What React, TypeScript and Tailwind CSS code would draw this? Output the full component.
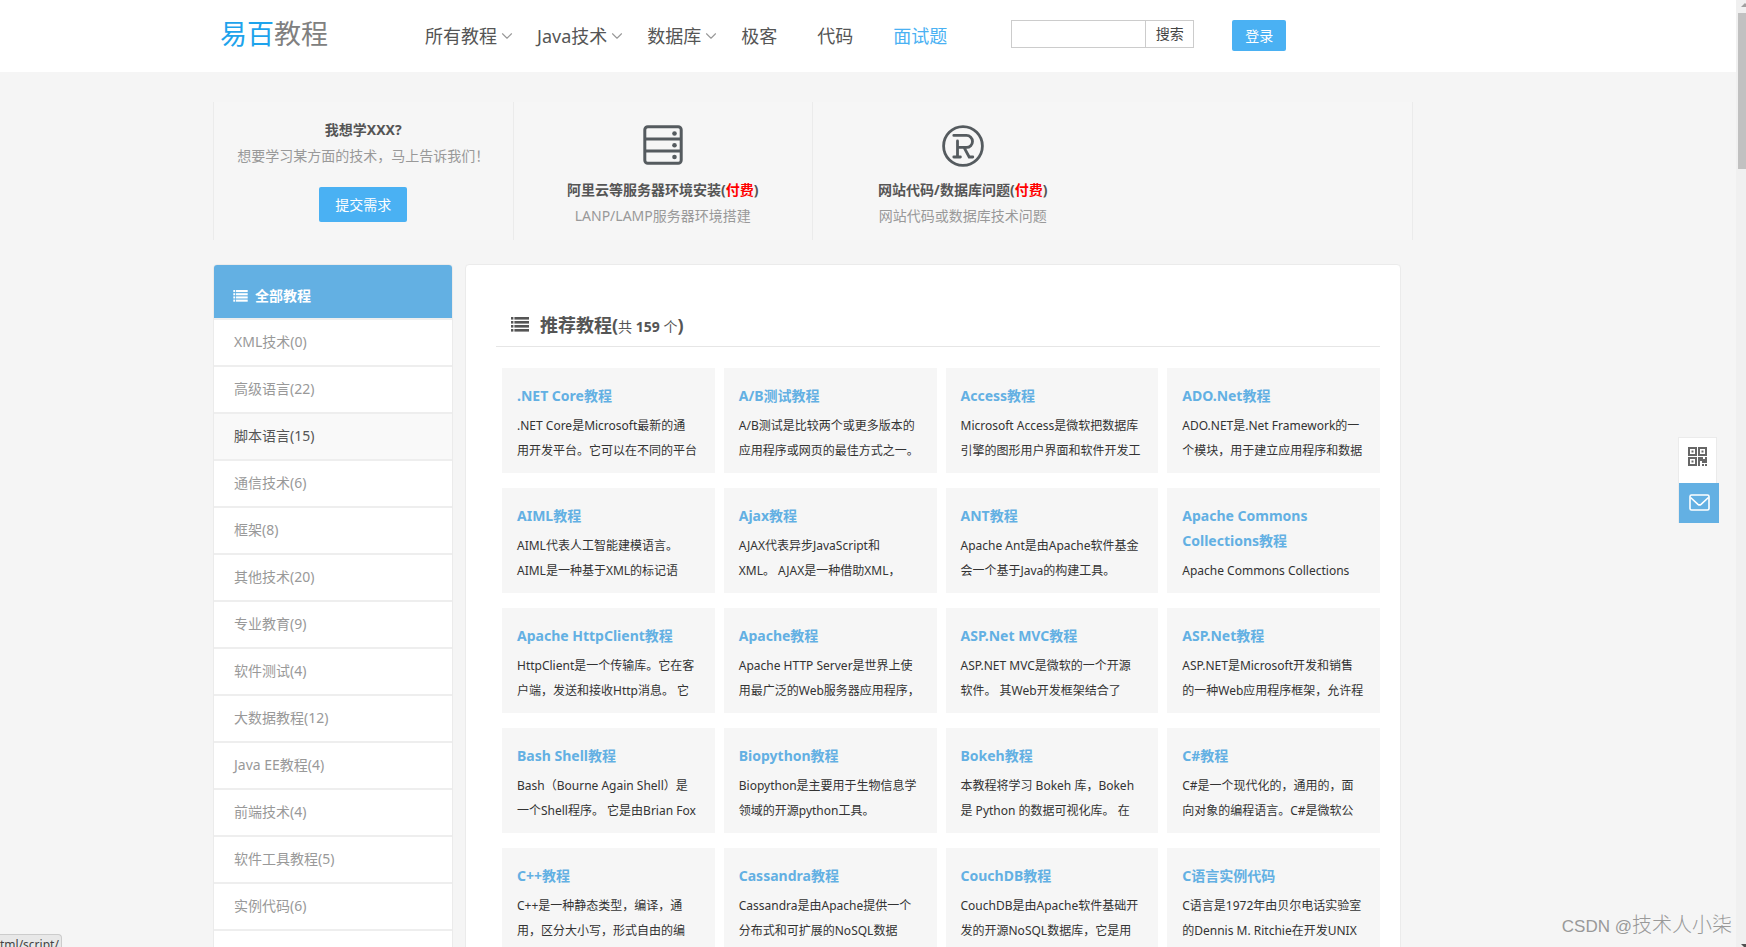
import React from 'react';
import { ChevronDown } from 'lucide-react';

interface Tutorial {
  title: string[];
  lines: string[];
}

const navItems = [
  { label: '所有教程', menu: true },
  { label: 'Java技术', menu: true },
  { label: '数据库', menu: true },
];

const categories = [
  'XML技术(0)',
  '高级语言(22)',
  '脚本语言(15)',
  '通信技术(6)',
  '框架(8)',
  '其他技术(20)',
  '专业教育(9)',
  '软件测试(4)',
  '大数据教程(12)',
  'Java EE教程(4)',
  '前端技术(4)',
  '软件工具教程(5)',
  '实例代码(6)',
];

const activeCategory = '脚本语言(15)';

const tutorials: Tutorial[] = [
  { title: ['.NET Core教程'], lines: ['.NET Core是Microsoft最新的通', '用开发平台。它可以在不同的平台'] },
  { title: ['A/B测试教程'], lines: ['A/B测试是比较两个或更多版本的', '应用程序或网页的最佳方式之一。'] },
  { title: ['Access教程'], lines: ['Microsoft Access是微软把数据库', '引擎的图形用户界面和软件开发工'] },
  { title: ['ADO.Net教程'], lines: ['ADO.NET是.Net Framework的一', '个模块，用于建立应用程序和数据'] },
  { title: ['AIML教程'], lines: ['AIML代表人工智能建模语言。', 'AIML是一种基于XML的标记语'] },
  { title: ['Ajax教程'], lines: ['AJAX代表异步JavaScript和', 'XML。 AJAX是一种借助XML，'] },
  { title: ['ANT教程'], lines: ['Apache Ant是由Apache软件基金', '会一个基于Java的构建工具。'] },
  { title: ['Apache Commons', 'Collections教程'], lines: ['Apache Commons Collections'] },
  { title: ['Apache HttpClient教程'], lines: ['HttpClient是一个传输库。它在客', '户端，发送和接收Http消息。 它'] },
  { title: ['Apache教程'], lines: ['Apache HTTP Server是世界上使', '用最广泛的Web服务器应用程序，'] },
  { title: ['ASP.Net MVC教程'], lines: ['ASP.NET MVC是微软的一个开源', '软件。 其Web开发框架结合了'] },
  { title: ['ASP.Net教程'], lines: ['ASP.NET是Microsoft开发和销售', '的一种Web应用程序框架，允许程'] },
  { title: ['Bash Shell教程'], lines: ['Bash（Bourne Again Shell）是', '一个Shell程序。 它是由Brian Fox'] },
  { title: ['Biopython教程'], lines: ['Biopython是主要用于生物信息学', '领域的开源python工具。'] },
  { title: ['Bokeh教程'], lines: ['本教程将学习 Bokeh 库，Bokeh', '是 Python 的数据可视化库。 在'] },
  { title: ['C#教程'], lines: ['C#是一个现代化的，通用的，面', '向对象的编程语言。C#是微软公'] },
  { title: ['C++教程'], lines: ['C++是一种静态类型，编译，通', '用，区分大小写，形式自由的编'] },
  { title: ['Cassandra教程'], lines: ['Cassandra是由Apache提供一个', '分布式和可扩展的NoSQL数据'] },
  { title: ['CouchDB教程'], lines: ['CouchDB是由Apache软件基础开', '发的开源NoSQL数据库，它是用'] },
  { title: ['C语言实例代码'], lines: ['C语言是1972年由贝尔电话实验室', '的Dennis M. Ritchie在开发UNIX'] },
];

const ListIcon = ({ className }: { className: string }) => (
  <svg viewBox="0 0 18 15" className={className} fill="currentColor" aria-hidden="true">
    {[0, 4, 8, 12].map((y) => (
      <g key={y}>
        <rect x="0" y={y} width="2.4" height="2.6" />
        <rect x="3.4" y={y} width="14.6" height="2.6" />
      </g>
    ))}
  </svg>
);

const ServerIcon = () => (
  <svg viewBox="0 0 40 40" className="h-10 w-10" fill="none" stroke="currentColor" strokeWidth="3" aria-hidden="true">
    <rect x="1.8" y="1.8" width="36.4" height="36.4" rx="3" />
    <path d="M1.8 14h36.4M1.8 26h36.4" />
    <g fill="currentColor" stroke="none">
      <circle cx="31.5" cy="8.5" r="2.3" />
      <circle cx="31.5" cy="20.3" r="2.3" />
      <circle cx="31.5" cy="32" r="2.3" />
    </g>
  </svg>
);

const RegisteredIcon = () => (
  <svg viewBox="0 0 42 42" className="h-[42px] w-[42px]" fill="none" stroke="currentColor" strokeWidth="2.8" strokeLinecap="round" aria-hidden="true">
    <circle cx="21" cy="21" r="19.4" />
    <path d="M11.8 10.4H24.500a6 6 0 0 1 0 12H15.500M15.500 16v16M11.800 32h6.600M22 22.400l5.200 9.600h3.600" />
  </svg>
);

const QrIcon = () => (
  <svg viewBox="0 0 19 19" className="h-[19px] w-[19px]" aria-hidden="true">
    <g fill="none" stroke="currentColor" strokeWidth="2">
      <rect x="1" y="1" width="7" height="7" />
      <rect x="11" y="1" width="7" height="7" />
      <rect x="1" y="11" width="7" height="7" />
    </g>
    <g fill="currentColor">
      <rect x="3.5" y="3.5" width="2" height="2" />
      <rect x="13.5" y="3.5" width="2" height="2" />
      <rect x="3.5" y="13.5" width="2" height="2" />
      <path d="M10 10h5v2h2v-2h2v6h-5v-2h-2v5h-2zM14 17h2v2h-2zM17 17h2v2h-2z" />
    </g>
  </svg>
);

const MailIcon = () => (
  <svg viewBox="0 0 21 17" className="h-[17px] w-[21px]" fill="none" stroke="currentColor" strokeWidth="1.6" strokeLinejoin="round" aria-hidden="true">
    <rect x="1" y="1" width="19" height="15" rx="1.5" />
    <path d="M1.5 3.5l7.5 6.8q1.500 1.300 3 0l7.500-6.800" />
  </svg>
);

const Header = () => (
  <header className="h-[72px] bg-white pr-[120px]">
    <div className="mx-auto flex w-[1200px] items-start">
      <a href="#" className="ml-[7px] mt-[14px] text-[27px] leading-10 text-[#808080]">
        <span className="text-[#1ea3ec]">易百</span>教程
      </a>
      <nav className="ml-[97px] mt-[22px] flex text-lg leading-7 text-[#555]">
        {navItems.map((item) => (
          <a key={item.label} href="#" className="mr-[21px] flex items-center">
            {item.label}
            {item.menu && <ChevronDown className="ml-px text-[#999]" size={18} strokeWidth={1.5} />}
          </a>
        ))}
        <a href="#">极客</a>
        <a href="#" className="ml-10">代码</a>
        <a href="#" className="ml-10 text-[#4ab1f3]">面试题</a>
      </nav>
      <form className="ml-16 mt-5 flex h-7" onSubmit={(e) => e.preventDefault()}>
        <input type="text" aria-label="搜索" className="w-[135px] border border-[#ccc] bg-white px-2 text-sm outline-none" />
        <button type="submit" className="w-12 border border-l-0 border-[#ccc] bg-white text-sm text-[#444]">搜索</button>
      </form>
      <button className="ml-[38px] mt-5 h-[31px] w-[54px] rounded-xs bg-[#4ab1f3] text-sm text-white">登录</button>
    </div>
  </header>
);

const Services = () => (
  <section className="mt-[30px] grid h-[138px] grid-cols-4 border-x border-[#ebebeb] bg-[#f6f6f6] text-center text-sm leading-[26px] text-[#999]">
    <div className="border-r border-[#ebebeb] pt-[15px]">
      <h3 className="font-bold text-[#555]">我想学XXX?</h3>
      <p>想要学习某方面的技术，马上告诉我们！</p>
      <button className="mt-[18px] h-[35px] w-[88px] rounded-xs bg-[#4ab1f3] text-white">提交需求</button>
    </div>
    <div className="flex flex-col items-center border-r border-[#ebebeb] pt-[23px] text-[#555b5f]">
      <div className="flex h-[52px] items-start">
        <ServerIcon />
      </div>
      <h3 className="font-bold text-[#555]">阿里云等服务器环境安装(<span className="text-[#f00]">付费</span>)</h3>
      <p className="text-[#999]">LANP/LAMP服务器环境搭建</p>
    </div>
    <div className="flex flex-col items-center pt-[23px] text-[#555b5f]">
      <div className="flex h-[52px] items-start">
        <RegisteredIcon />
      </div>
      <h3 className="font-bold text-[#555]">网站代码/数据库问题(<span className="text-[#f00]">付费</span>)</h3>
      <p className="text-[#999]">网站代码或数据库技术问题</p>
    </div>
  </section>
);

const Sidebar = () => (
  <aside className="w-60 shrink-0 overflow-hidden rounded-t border border-[#ebebeb] bg-white text-sm">
    <h2 className="flex h-[53px] items-center bg-[#63b0e3] pl-[19px] pt-2 font-bold text-white">
      <ListIcon className="mr-[7px] h-3 w-[15px]" />
      全部教程
    </h2>
    <ul>
      {categories.map((name) => (
        <li key={name} className="border-t-2 border-[#eee]">
          <a
            href="#"
            className={`block h-[45px] pl-5 leading-[44px] ${
              name === activeCategory ? 'bg-[#f9f9f9] text-[#555]' : 'text-[#999]'
            }`}
          >
            {name}
          </a>
        </li>
      ))}
      <li className="border-t-2 border-[#eee]" />
    </ul>
  </aside>
);

const TutorialCard = ({ tutorial }: { tutorial: Tutorial }) => (
  <a href="#" className="block h-[105px] overflow-hidden whitespace-nowrap bg-[#f6f6f6] px-[15px] pt-[15px]">
    <h3 className="text-sm font-bold leading-[25px] text-[#63b0e3]">
      {tutorial.title.map((line) => (
        <span key={line} className="block">{line}</span>
      ))}
    </h3>
    <p className="mt-[5px] text-xs leading-[25px] text-[#333]">
      {tutorial.lines.map((line) => (
        <span key={line} className="block">{line}</span>
      ))}
    </p>
  </a>
);

const App: React.FC = () => {
  return (
    <div className="relative h-screen overflow-hidden bg-[#f5f5f5] font-['Noto_Sans','Noto_Sans_CJK_SC',sans-serif]">
      <Header />
      <div className="pr-[120px]">
        <div className="mx-auto w-[1200px]">
          <Services />
          <div className="mt-6 flex gap-3">
            <Sidebar />
            <main className="mr-3 flex-1 rounded-t border border-[#ebebeb] bg-white pb-8 pl-[30px] pr-5">
              <h1 className="mt-10 flex h-[42px] items-center border-b border-[#e6e6e6] pb-0.5 pl-[15px] text-lg font-bold text-[#555]">
                <ListIcon className="mr-[11px] h-[15px] w-[18px]" />
                <span>
                  推荐教程(
                  <span className="text-sm font-normal">
                    共 <b>159</b> 个
                  </span>
                  )
                </span>
              </h1>
              <div className="ml-1.5 mt-[21px] grid grid-cols-4 gap-x-[9px] gap-y-[15px]">
                {tutorials.map((tutorial) => (
                  <TutorialCard key={tutorial.title[0]} tutorial={tutorial} />
                ))}
              </div>
            </main>
          </div>
        </div>
      </div>

      {/* floating contact buttons */}
      <div className="absolute right-[27px] top-[437px] flex w-[41px] flex-col items-start border-l border-[#ebebeb]">
        <button aria-label="二维码" className="flex h-[46px] w-[38px] items-start justify-center border-r border-t border-[#ebebeb] bg-white pt-[9px] text-[#666]">
          <QrIcon />
        </button>
        <button aria-label="邮箱" className="flex h-10 w-10 items-start justify-center bg-[#63b0e3] pt-[11px] text-white">
          <MailIcon />
        </button>
      </div>

      {/* scrollbar */}
      <div className="absolute inset-y-0 right-0 flex w-2.5 flex-col justify-between bg-[#f0f0f0] pl-0.5">
        <div>
          <svg viewBox="0 0 8 13" className="h-[13px] w-2" fill="#a0a0a0" aria-hidden="true">
            <path d="M3 7l4-4 1 1v3z" />
          </svg>
          <div className="h-[156px] bg-[#c1c1c1]" />
        </div>
        <svg viewBox="0 0 8 4" className="h-1 w-2" fill="#505050" aria-hidden="true">
          <path d="M3 1h5v3H6z" />
        </svg>
      </div>

      <div className="absolute bottom-0 left-0 h-[13px] w-[62px] overflow-hidden rounded-tr border-r border-t border-[#ccc] bg-[#e8e8e8] text-xs leading-5 text-[#444]">
        tml/script/
      </div>
      <div className="absolute bottom-1 right-[14px] font-['Liberation_Sans','Noto_Sans_CJK_SC',sans-serif] text-xl font-light leading-8 text-[#999]">
        <span className="text-[17px]">CSDN @</span>技术人小柒
      </div>
    </div>
  );
};

export default App;
